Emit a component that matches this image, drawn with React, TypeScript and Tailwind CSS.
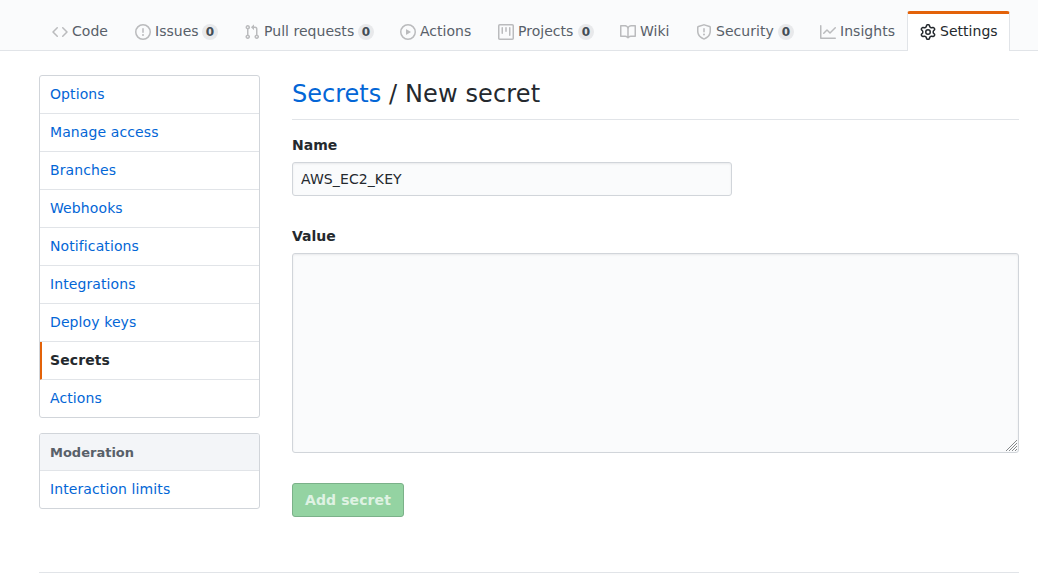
import { clsx } from 'clsx';

const icons = {
  code: 'M4.72 3.22a.75.75 0 011.06 1.06L2.06 8l3.72 3.72a.75.75 0 11-1.06 1.06L.47 8.53a.75.75 0 010-1.06l4.25-4.25zm6.56 0a.75.75 0 10-1.06 1.06L13.94 8l-3.72 3.72a.75.75 0 101.06 1.06l4.25-4.25a.75.75 0 000-1.06l-4.25-4.25z',
  issue: 'M8 1.5a6.5 6.5 0 100 13 6.5 6.5 0 000-13zM0 8a8 8 0 1116 0A8 8 0 010 8zm9 3a1 1 0 11-2 0 1 1 0 012 0zm-.25-6.25a.75.75 0 00-1.5 0v3.5a.75.75 0 001.5 0v-3.5z',
  pull: 'M7.177 3.073L9.573.677A.25.25 0 0110 .854v4.792a.25.25 0 01-.427.177L7.177 3.427a.25.25 0 010-.354zM3.75 2.5a.75.75 0 100 1.5.75.75 0 000-1.5zm-2.25.75a2.25 2.25 0 113 2.122v5.256a2.251 2.251 0 11-1.5 0V5.372A2.25 2.25 0 011.5 3.25zM11 2.5h-1V4h1a1 1 0 011 1v5.628a2.251 2.251 0 101.5 0V5A2.5 2.5 0 0011 2.5zm1 10.25a.75.75 0 111.5 0 .75.75 0 01-1.5 0zM3.75 12a.75.75 0 100 1.5.75.75 0 000-1.5z',
  play: 'M1.5 8a6.5 6.5 0 1113 0 6.5 6.5 0 01-13 0zM8 0a8 8 0 100 16A8 8 0 008 0zM6.379 5.227A.25.25 0 006 5.442v5.117a.25.25 0 00.379.214l4.264-2.559a.25.25 0 000-.428L6.379 5.227z',
  project: 'M1.75 0A1.75 1.75 0 000 1.75v12.5C0 15.216.784 16 1.75 16h12.5A1.75 1.75 0 0016 14.25V1.75A1.75 1.75 0 0014.25 0H1.75zM1.5 1.75a.25.25 0 01.25-.25h12.5a.25.25 0 01.25.25v12.5a.25.25 0 01-.25.25H1.75a.25.25 0 01-.25-.25V1.75zM11.75 3a.75.75 0 00-.75.75v7.5a.75.75 0 001.5 0v-7.5a.75.75 0 00-.75-.75zm-8.25.75a.75.75 0 011.5 0v5.5a.75.75 0 01-1.5 0v-5.5zM8 3a.75.75 0 00-.75.75v3.5a.75.75 0 001.5 0v-3.5A.75.75 0 008 3z',
  book: 'M0 1.75A.75.75 0 01.75 1h4.253c1.227 0 2.317.59 3 1.501A3.744 3.744 0 0111.006 1h4.245a.75.75 0 01.75.75v10.5a.75.75 0 01-.75.75h-4.507a2.25 2.25 0 00-1.591.659l-.622.621a.75.75 0 01-1.06 0l-.622-.621A2.25 2.25 0 005.258 13H.75a.75.75 0 01-.75-.75V1.75zm8.755 3a2.25 2.25 0 012.25-2.25H14.5v9h-3.757c-.71 0-1.4.201-1.992.572l.004-7.322zm-1.504 7.324l.004-5.073-.002-2.253A2.25 2.25 0 005.003 2.5H1.5v9h3.757a3.75 3.75 0 011.994.574z',
  shield: 'M7.467.133a1.75 1.75 0 011.066 0l5.25 1.68A1.75 1.75 0 0115 3.48V7c0 1.566-.32 3.182-1.303 4.682-.983 1.498-2.585 2.813-5.032 3.855a1.7 1.7 0 01-1.33 0c-2.447-1.042-4.049-2.357-5.032-3.855C1.32 10.182 1 8.566 1 7V3.48a1.75 1.75 0 011.217-1.667l5.25-1.68zm.61 1.429a.25.25 0 00-.153 0l-5.25 1.68a.25.25 0 00-.174.238V7c0 1.358.275 2.666 1.057 3.86.784 1.194 2.121 2.34 4.366 3.297a.2.2 0 00.154 0c2.245-.956 3.582-2.104 4.366-3.298C13.225 9.666 13.5 8.36 13.5 7V3.48a.25.25 0 00-.174-.237l-5.25-1.68zM9 10.5a1 1 0 11-2 0 1 1 0 012 0zm-.25-5.75a.75.75 0 10-1.5 0v3a.75.75 0 001.5 0v-3z',
  graph: 'M1.5 1.75a.75.75 0 00-1.5 0v12.5c0 .414.336.75.75.75h14.5a.75.75 0 000-1.5H1.5V1.75zm14.28 2.53a.75.75 0 00-1.06-1.06L10 7.94 7.53 5.47a.75.75 0 00-1.06 0L3.22 8.72a.75.75 0 001.06 1.06L7 7.06l2.47 2.47a.75.75 0 001.06 0l5.25-5.25z',
  gear: 'M7.429 1.525a6.593 6.593 0 011.142 0c.036.003.108.036.137.146l.289 1.105c.147.56.55.967.997 1.189.174.086.341.183.501.29.417.278.97.423 1.53.27l1.102-.303c.11-.03.175.016.195.046.219.31.41.641.573.989.014.031.022.11-.059.19l-.815.806c-.411.406-.562.957-.53 1.456a4.588 4.588 0 010 .582c-.032.499.119 1.05.53 1.456l.815.806c.08.08.073.159.059.19a6.494 6.494 0 01-.573.99c-.02.029-.086.074-.195.045l-1.103-.303c-.559-.153-1.112-.008-1.529.27-.16.107-.327.204-.5.29-.449.222-.851.628-.998 1.189l-.289 1.105c-.029.11-.101.143-.137.146a6.613 6.613 0 01-1.142 0c-.036-.003-.108-.037-.137-.146l-.289-1.105c-.147-.56-.55-.967-.997-1.189a4.502 4.502 0 01-.501-.29c-.417-.278-.97-.423-1.53-.27l-1.102.303c-.11.03-.175-.016-.195-.046a6.492 6.492 0 01-.573-.989c-.014-.031-.022-.11.059-.19l.815-.806c.411-.406.562-.957.53-1.456a4.587 4.587 0 010-.582c.032-.499-.119-1.05-.53-1.456l-.815-.806c-.08-.08-.073-.159-.059-.19a6.44 6.44 0 01.573-.99c.02-.029.086-.075.195-.045l1.103.303c.559.153 1.112.008 1.529-.27.16-.107.327-.204.5-.29.449-.222.851-.628.998-1.189l.289-1.105c.029-.11.101-.143.137-.146zM8 0c-.236 0-.47.01-.701.03-.743.065-1.29.615-1.458 1.261l-.29 1.106c-.017.066-.078.158-.211.224a5.994 5.994 0 00-.668.386c-.123.082-.233.09-.3.071L3.27 2.776c-.644-.177-1.392.02-1.82.63a7.977 7.977 0 00-.704 1.217c-.315.675-.111 1.422.363 1.891l.815.806c.05.048.098.147.088.294a6.084 6.084 0 000 .772c.01.147-.038.246-.088.294l-.815.806c-.474.469-.678 1.216-.363 1.891.2.428.436.835.704 1.218.428.609 1.176.806 1.82.63l1.103-.303c.066-.019.176-.011.299.071.213.143.436.272.668.386.133.066.194.158.212.224l.289 1.106c.169.646.715 1.196 1.458 1.26a8.094 8.094 0 001.402 0c.743-.064 1.29-.614 1.458-1.26l.29-1.106c.017-.066.078-.158.211-.224a5.98 5.98 0 00.668-.386c.123-.082.233-.09.3-.071l1.102.302c.644.177 1.392-.02 1.82-.63.268-.382.505-.789.704-1.217.315-.675.111-1.422-.364-1.891l-.814-.806c-.05-.048-.098-.147-.088-.294a6.1 6.1 0 000-.772c-.01-.147.039-.246.088-.294l.814-.806c.475-.469.679-1.216.364-1.891a7.992 7.992 0 00-.704-1.218c-.428-.609-1.176-.806-1.82-.63l-1.103.303c-.066.019-.176.011-.299-.071a5.991 5.991 0 00-.668-.386c-.133-.066-.194-.158-.212-.224L10.16 1.29C9.99.645 9.444.095 8.701.031A8.094 8.094 0 008 0zm1.5 8a1.5 1.5 0 11-3 0 1.5 1.5 0 013 0zM11 8a3 3 0 11-6 0 3 3 0 016 0z',
};

type Tab = { label: string; icon: keyof typeof icons; width: string; count?: number; active?: boolean };

const tabs: Tab[] = [
  { label: 'Code', icon: 'code', width: 'w-[83px]' },
  { label: 'Issues', icon: 'issue', width: 'w-[109px]', count: 0 },
  { label: 'Pull requests', icon: 'pull', width: 'w-[156px]', count: 0 },
  { label: 'Actions', icon: 'play', width: 'w-[98px]' },
  { label: 'Projects', icon: 'project', width: 'w-[122px]', count: 0 },
  { label: 'Wiki', icon: 'book', width: 'w-[76px]' },
  { label: 'Security', icon: 'shield', width: 'w-[124px]', count: 0 },
  { label: 'Insights', icon: 'graph', width: 'w-[100px]' },
  { label: 'Settings', icon: 'gear', width: 'w-[103px]', active: true },
];

const menu = ['Options', 'Manage access', 'Branches', 'Webhooks', 'Notifications', 'Integrations', 'Deploy keys', 'Secrets', 'Actions'];

function TabLink({ label, icon, width, count, active }: Tab) {
  return (
    <a
      href="#"
      className={clsx(
        'flex h-10 items-start rounded-t-[3px] border-x border-t-[3px] px-3 pt-[7px] leading-[21px] tracking-[0.03px] whitespace-nowrap',
        width,
        active ? 'border-x-[#e1e4e8] border-t-[#e36209] bg-white text-[#24292e]' : 'border-transparent text-[#586069]',
      )}
    >
      <svg viewBox="0 0 16 16" className={clsx('mt-[3px] mr-1 h-4 w-4 shrink-0', active ? 'text-[#24292e]' : 'text-[#babbbd]')} fill="currentColor" fillRule="evenodd">
        <path d={icons[icon]} />
      </svg>
      <span>{label}</span>
      {count !== undefined && (
        <span className="mt-[3px] ml-auto w-4 rounded-[20px] bg-[#1b1f2314] text-center text-[12px] leading-4 font-bold text-[#444d56]">{count}</span>
      )}
    </a>
  );
}

export default function App() {
  return (
    <div className="h-[581px] overflow-hidden bg-white font-['DejaVu_Sans',sans-serif] text-[14px] leading-[21px] text-[#24292e]">
      <header className="h-[51px] border-b border-[#e1e4e8] bg-[#fafbfc] pt-[11px] pl-[39px]">
        <nav className="flex">
          {tabs.map((tab) => (
            <TabLink key={tab.label} {...tab} />
          ))}
        </nav>
      </header>

      <div className="mr-[19px] ml-[39px] pt-6">
        <div className="flex h-[498px] items-start gap-8 border-b border-[#e1e4e8]">
          <aside className="flex w-[221px] shrink-0 flex-col gap-[15px] tracking-[0.1px]">
            <nav className="divide-y divide-[#e1e4e8] overflow-hidden rounded-[3px] border border-[#d1d5da]">
              {menu.map((item) =>
                item === 'Secrets' ? (
                  <a key={item} href="#" className="-ml-px flex h-[38px] border-l-[3px] border-l-[#e36209] pt-2 pl-2 font-bold">
                    {item}
                  </a>
                ) : (
                  <a key={item} href="#" className="flex h-[38px] pt-2 pl-2.5 text-[#0366d6] last:h-[37px]">
                    {item}
                  </a>
                ),
              )}
            </nav>
            <nav className="overflow-hidden rounded-[3px] border border-[#d1d5da]">
              <h2 className="h-[37px] border-b border-[#e1e4e8] bg-[#f3f5f8] pt-[9px] pl-2.5 text-[13px] leading-5 font-bold tracking-normal text-[#586069]">Moderation</h2>
              <a href="#" className="flex h-[37px] pt-2 pl-2.5 text-[#0366d6]">Interaction limits</a>
            </nav>
          </aside>

          <main className="min-w-0 flex-1">
            <h1 className="h-[45px] border-b border-[#e1e4e8] pt-px text-[24px] leading-9 tracking-[0.13px]">
              <a href="#" className="tracking-normal text-[#0366d6]">Secrets</a> / New secret
            </h1>
            <form className="flex flex-col items-start">
              <label htmlFor="name" className="mt-[15px] font-bold">Name</label>
              <input
                id="name"
                defaultValue="AWS_EC2_KEY"
                className="mt-1.5 h-[34px] w-[440px] rounded-[3px] border border-[#d1d5da] bg-[#fafbfc] px-2 text-[14px] leading-5 tracking-[0.1px] shadow-[inset_0_1px_2px_rgba(27,31,35,0.075)] outline-none"
              />
              <label htmlFor="value" className="mt-[30px] font-bold">Value</label>
              <div className="relative mt-1.5 flex w-full">
                <textarea
                  id="value"
                  className="h-[200px] w-full resize-none rounded-[3px] border border-[#d1d5da] bg-[#fafbfc] p-2 shadow-[inset_0_1px_2px_rgba(27,31,35,0.075)] outline-none"
                />
                <svg viewBox="0 0 11 11" className="pointer-events-none absolute right-[2px] bottom-[2px] h-[11px] w-[11px]" fill="none" stroke="#777a7d" strokeWidth="0.9">
                  <path d="M0 11L11 0M3 11l8-8M6 11l5-5M9 11l2-2" />
                </svg>
              </div>
              <button
                type="button"
                disabled
                className="mt-[30px] h-[34px] w-28 rounded-[3px] border border-[#7bb189] bg-[#94d3a2] text-[14px] leading-5 font-bold tracking-[0.1px] whitespace-nowrap text-[#dff2e3]"
              >
                Add secret
              </button>
            </form>
          </main>
        </div>
      </div>
    </div>
  );
}
